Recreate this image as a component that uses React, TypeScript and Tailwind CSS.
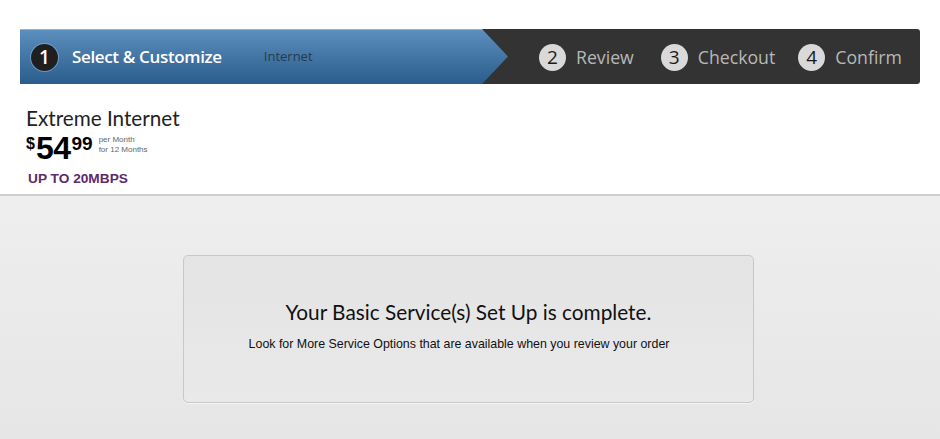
const steps = [
  { n: 2, label: "Review", ml: "ml-[31px]" },
  { n: 3, label: "Checkout", ml: "ml-[27px]" },
  { n: 4, label: "Confirm", ml: "ml-[23px]" },
];

const StepBar = () => {
  return (
    <div className="mx-[20px] mt-[29px] flex h-[55px] items-center rounded-r-[3px] bg-[#333333] font-['Open_Sans',sans-serif]">
      <div className="flex h-full w-[488px] items-center border-t border-[#8fb3d3] bg-gradient-to-b from-[#5c8fbe] to-[#2b5d8c] pl-[11px] [clip-path:polygon(0_0,462px_0,100%_50%,462px_100%,0_100%)]">
        <div className="flex h-[27px] w-[27px] items-center justify-center rounded-full bg-[#1f1f1f] text-[19px] font-semibold text-white shadow-[0_0_0_1px_rgba(140,180,220,0.6)]">
          1
        </div>
        <span className="ml-[14px] text-[17px] font-semibold tracking-[-0.35px] text-white">
          Select &amp; Customize
        </span>
        <span className="ml-[42px] text-[13px] text-[#253a4f]">Internet</span>
      </div>
      {steps.map((s) => (
        <div key={s.n} className={`mt-[2px] flex items-center ${s.ml}`}>
          <div className="flex h-[27px] w-[27px] items-center justify-center rounded-full bg-[#d9d9d9] text-[19px] text-[#1a1a1a]">
            {s.n}
          </div>
          <span className="ml-[10px] text-[17.7px] text-[#b8b8b8]">{s.label}</span>
        </div>
      ))}
    </div>
  );
};

const Plan = () => {
  return (
    <div className="h-[110px] pl-[26px] pt-[22px]">
      <h1 className="font-['Lato',sans-serif] text-[20.7px] leading-[24px] text-[#222]">
        Extreme Internet
      </h1>
      <div className="mt-[4px] flex items-start font-['Liberation_Sans',Arial,sans-serif] text-black">
        <span className="mt-[2px] text-[16px] font-bold leading-none">$</span>
        <span className="ml-[1px] text-[32px] font-bold leading-[28px] tracking-[-0.5px]">54</span>
        <span className="ml-[1px] text-[19px] font-bold leading-none">99</span>
        <div className="ml-[6px] mt-[1px] text-[8px] leading-[10px] text-[#666]">
          <div>per Month</div>
          <div>for 12 Months</div>
        </div>
      </div>
      <div className="ml-[2px] mt-[7px] font-['Liberation_Sans',Arial,sans-serif] text-[13.7px] font-bold text-[#5e2a6b]">
        UP TO 20MBPS
      </div>
    </div>
  );
};

export default function App() {
  return (
    <div className="flex min-h-[439px] flex-col bg-white">
      <StepBar />
      <Plan />
      <div className="flex-1 border-t-2 border-[#cfcfcf] bg-gradient-to-b from-[#eeeeee] to-[#e6e6e6] pt-[59px]">
        <div className="ml-[183px] flex h-[148px] w-[571px] flex-col items-center rounded-[5px] border border-[#c8c8c8] bg-gradient-to-b from-[#e4e4e4] to-[#e9e9e9] pt-[40px] shadow-[0_1px_0_#f5f5f5]">
          <div className="font-['Lato',sans-serif] text-[20.8px] text-[#111]">
            Your Basic Service(s) Set Up is complete.
          </div>
          <div className="mr-[19px] mt-[8px] font-['Liberation_Sans',Arial,sans-serif] text-[12.4px] text-[#111]">
            Look for More Service Options that are available when you review your order
          </div>
        </div>
      </div>
    </div>
  );
}
